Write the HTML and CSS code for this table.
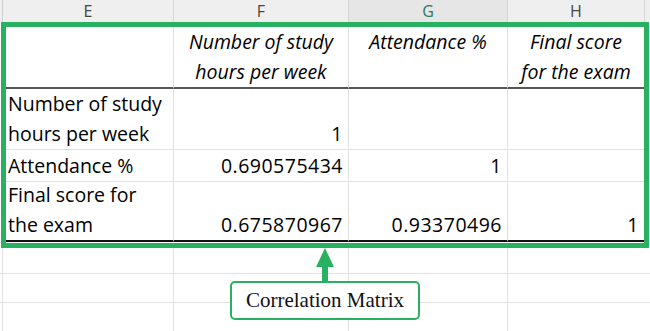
FILE: index.html
```html
<!DOCTYPE html>
<html>
<head>
<meta charset="utf-8">
<link rel="stylesheet" href="styles.css">
</head>
<body>
<div class="colhead">
  <div class="corner"></div>
  <div>E</div>
  <div>F</div>
  <div class="sel">G</div>
  <div class="last">H</div>
</div>
<div class="matrix">
  <div class="grid">
    <div class="c hd"></div>
    <div class="c hd"><span>Number of study<br>hours per week</span></div>
    <div class="c hd"><span>Attendance %<br>&nbsp;</span></div>
    <div class="c hd last"><span>Final score<br>for the exam</span></div>

    <div class="c r2">Number of study<br>hours per week</div>
    <div class="c r2 num">1</div>
    <div class="c r2"></div>
    <div class="c r2 last"></div>

    <div class="c r3">Attendance %</div>
    <div class="c r3 num">0.690575434</div>
    <div class="c r3 num">1</div>
    <div class="c r3 last"></div>

    <div class="c r4">Final score for<br>the exam</div>
    <div class="c r4 num">0.675870967</div>
    <div class="c r4 num">0.93370496</div>
    <div class="c r4 num last">1</div>
  </div>
</div>
<div class="below">
  <div></div><div></div><div></div><div></div><div class="last"></div>
  <div></div><div></div><div></div><div></div><div class="last"></div>
  <div></div><div></div><div></div><div></div><div class="last"></div>
</div>
<svg class="arrow" width="22" height="38" viewBox="0 0 22 38">
  <polygon points="11,0 2,19 20,19" fill="#29b162"/>
  <rect x="8" y="18" width="6" height="18" fill="#29b162"/>
</svg>
<div class="callout">Correlation Matrix</div>
</body>
</html>
```
FILE: styles.css
```css
* { box-sizing: border-box; margin: 0; padding: 0; }
html, body { width: 650px; height: 331px; overflow: hidden; background: #fff; }
body { font-family: "Open Sans", sans-serif; color: #000; position: relative; }

.colhead {
  display: grid;
  grid-template-columns: 3px 171px 175px 159px 1fr;
  height: 22px;
  background: #efefef;
}
.colhead > div {
  border-right: 1px solid #d6d6d6;
  display: flex;
  align-items: center;
  justify-content: center;
  font-size: 16px;
  line-height: 22px;
  color: #444;
}
.colhead .corner { border-right-color: #cfcfcf; }
.colhead .sel { color: #2d7a5c; background: #e6e6e6; }
.colhead .last { border-right: 1px solid #d6d6d6; margin-right: 5px; }

.matrix {
  margin-left: 1px;
  width: 648px;
  border: 5px solid #29b162;
  padding-bottom: 1px;
}
.grid {
  display: grid;
  grid-template-columns: 168px 175px 159px 1fr;
  grid-template-rows: 62px 61px 32px 60px;
}
.c {
  display: flex;
  flex-direction: column;
  justify-content: flex-end;
  font-size: 19.5px;
  line-height: 30px;
  padding: 0 5px 0 2px;
  border-right: 1px solid #e1e1e1;
  white-space: nowrap;
}
.c.last { border-right: none; }
.c.num { text-align: right; letter-spacing: 0.5px; }
.hd {
  font-style: italic;
  text-align: center;
  padding: 0;
  border-bottom: 2px solid #555;
}
.r2, .r3 { border-bottom: 1px solid #e1e1e1; }
.r4 { border-bottom: 2px solid #111; }

.below {
  display: grid;
  grid-template-columns: 3px 171px 175px 159px 1fr;
  grid-template-rows: 26px 29px 1fr;
  height: 84px;
}
.below > div {
  border-right: 1px solid #e1e1e1;
  border-bottom: 1px solid #e1e1e1;
}
.below > div.last { border-right: none; }

.arrow {
  position: absolute;
  left: 314px;
  top: 248px;
}
.callout {
  position: absolute;
  left: 230px;
  top: 281px;
  width: 190px;
  height: 39px;
  border: 2px solid #29b162;
  border-radius: 5px;
  background: #fff;
  display: flex;
  align-items: center;
  justify-content: center;
  font-family: "Liberation Serif", serif;
  font-size: 21px;
  color: #111;
}
```
